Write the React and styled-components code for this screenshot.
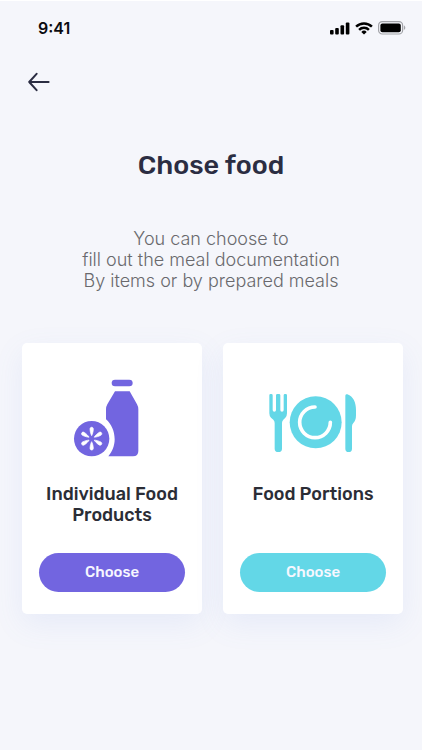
import React from 'react'
import styled, { createGlobalStyle } from 'styled-components'

const GlobalStyle = createGlobalStyle`
  * {
    box-sizing: border-box;
  }

  body {
    margin: 0;
    background: #f5f6fb;
    font-family: Rubik, Roboto, sans-serif;
  }
`

const Screen = styled.div`
  min-height: 100vh;
  border-top: 1px solid #ffffff;
  background: #f5f6fb;
`

const StatusBar = styled.header`
  display: flex;
  align-items: center;
  justify-content: space-between;
  height: 54px;
  padding: 0 16px 0 38px;
`

const Time = styled.time`
  color: #0b0b0f;
  font-family: Inter, sans-serif;
  font-size: 16px;
  font-weight: 600;
  line-height: 20px;
`

const StatusIcons = styled.div`
  display: flex;
  align-items: center;
  gap: 5px;
`

const BackButton = styled.button`
  display: block;
  margin: 15px 0 0 28px;
  padding: 0;
  border: 0;
  background: none;
  line-height: 0;
  cursor: pointer;
`

const Title = styled.h1`
  margin: 53px 0 0;
  color: #2b2d42;
  font-size: 27px;
  font-weight: 500;
  line-height: 36px;
  text-align: center;
`

const Description = styled.p`
  margin: 45px 0 0;
  color: #69696d;
  font-family: Inter, sans-serif;
  font-size: 18px;
  font-weight: 300;
  line-height: 21px;
  text-align: center;
`

const Cards = styled.main`
  display: grid;
  grid-template-columns: 1fr 1fr;
  gap: 21px;
  padding: 52px 19px 40px 22px;
`

const Card = styled.section`
  display: flex;
  flex-direction: column;
  align-items: center;
  padding: 36px 17px 22px;
  border-radius: 5px;
  background: #ffffff;
  box-shadow: 0 10px 30px rgba(110, 135, 225, 0.1);
`

const CardTitle = styled.h2`
  flex: 1;
  margin: 27px 0;
  color: #2b2d36;
  font-size: 18px;
  font-weight: 500;
  line-height: 21px;
  text-align: center;
`

const ChooseButton = styled.button`
  width: 100%;
  height: 39px;
  padding: 0 0 2px;
  border: 0;
  border-radius: 20px;
  background: ${({ $color }) => $color};
  color: #f7f7ff;
  font-family: inherit;
  font-size: 15px;
  font-weight: 500;
  cursor: pointer;
`

const SignalIcon = () => (
  <svg width="20" height="13" viewBox="0 0 20 13" fill="#000000" aria-hidden="true">
    <rect x="0" y="8" width="3.6" height="4.6" rx="1" />
    <rect x="5.2" y="6" width="3.6" height="6.6" rx="1" />
    <rect x="10.5" y="3.2" width="3.6" height="9.4" rx="1" />
    <rect x="15.8" y="0.4" width="3.6" height="12.2" rx="1" />
  </svg>
)

const WifiIcon = () => (
  <svg width="18" height="13" viewBox="0 0 18 13" fill="none" stroke="#000000" strokeWidth="2.5" aria-hidden="true">
    <path d="M1.1 4.6a11.3 11.3 0 0 1 15.8 0" />
    <path d="M4.1 7.8a7 7 0 0 1 9.8 0" />
    <path d="M9 12.6 6.3 9.9a3.9 3.9 0 0 1 5.4 0Z" fill="#000000" stroke="none" />
  </svg>
)

const BatteryIcon = () => (
  <svg width="28" height="14" viewBox="0 0 28 14" aria-hidden="true">
    <rect x="0.6" y="0.6" width="24" height="12.4" rx="3.6" fill="none" stroke="#a2a3a8" strokeWidth="1.2" />
    <rect x="2.4" y="2.4" width="20.4" height="8.8" rx="2" fill="#000000" />
    <path d="M25.9 4.6v4.4c.9-.4 1.4-1.2 1.4-2.2s-.5-1.8-1.4-2.2Z" fill="#a2a3a8" />
  </svg>
)

const ArrowIcon = () => (
  <svg width="22" height="24" viewBox="0 0 22 24" fill="none" stroke="#2b2d42" strokeWidth="2" strokeLinecap="round" strokeLinejoin="round" aria-hidden="true">
    <path d="M20.6 12H1.2M8.6 3.8 1.2 12l7.4 8.2" />
  </svg>
)

const BottleIcon = () => (
  <svg width="80" height="78" viewBox="35 29 240 234" fill="#7265e0" aria-hidden="true">
    <rect x="154" y="31" width="63" height="20" rx="10" />
    <path d="M164 66h44l22 39q4 7 4 15v125q0 16-16 16h-74c11-13 19-31 19-51 0-25-10-46-26-60v-30q0-8 4-15Z" />
    <circle cx="94" cy="208" r="53" />
    {[0, 60, 120, 180, 240, 300].map((angle) => (
      <path
        key={angle}
        d="M94 199c-2-3-5-13-5-20 0-7 10-7 10 0 0 7-3 17-5 20Z"
        fill="#ffffff"
        stroke="#ffffff"
        strokeWidth="2"
        transform={`rotate(${angle} 94 208)`}
      />
    ))}
  </svg>
)

const PlateIcon = () => (
  <svg width="90" height="78" viewBox="24 -1 270 234" fill="#63d7e7" aria-hidden="true">
    <path d="M28 48q0-4 4-4h2q4 0 4 4v44q0 5 5 5t5-5V48q0-4 4-4h5q4 0 4 4v44q0 5 5 5t5-5V48q0-4 4-4h2q4 0 4 4v54q0 8-5 13l-6 6q-4 4-4 10v77q0 10-11 10t-11-10v-77q0-6-4-10l-7-6q-5-5-5-13Z" />
    <circle cx="167" cy="129" r="78" />
    <path d="M165 83a46 46 0 1 0 46 46" fill="none" stroke="#ffffff" strokeWidth="11" strokeLinecap="round" />
    <path d="M256 49q0-6 6-4c18 6 26 25 26 47v16q0 15-8 23-4 4-4 10v67q0 10-10 10t-10-10Z" />
  </svg>
)

const options = [
  { title: 'Individual Food Products', color: '#7265e0', Icon: BottleIcon },
  { title: 'Food Portions', color: '#63d7e7', Icon: PlateIcon },
]

const App = () => (
  <>
    <GlobalStyle />
    <Screen>
      <StatusBar>
        <Time>9:41</Time>
        <StatusIcons>
          <SignalIcon />
          <WifiIcon />
          <BatteryIcon />
        </StatusIcons>
      </StatusBar>
      <BackButton type="button" aria-label="Back">
        <ArrowIcon />
      </BackButton>
      <Title>Chose food</Title>
      <Description>
        You can choose to
        <br />
        fill out the meal documentation
        <br />
        By items or by prepared meals
      </Description>
      <Cards>
        {options.map(({ title, color, Icon }) => (
          <Card key={title}>
            <Icon />
            <CardTitle>{title}</CardTitle>
            <ChooseButton type="button" $color={color}>Choose</ChooseButton>
          </Card>
        ))}
      </Cards>
    </Screen>
  </>
)

export default App
